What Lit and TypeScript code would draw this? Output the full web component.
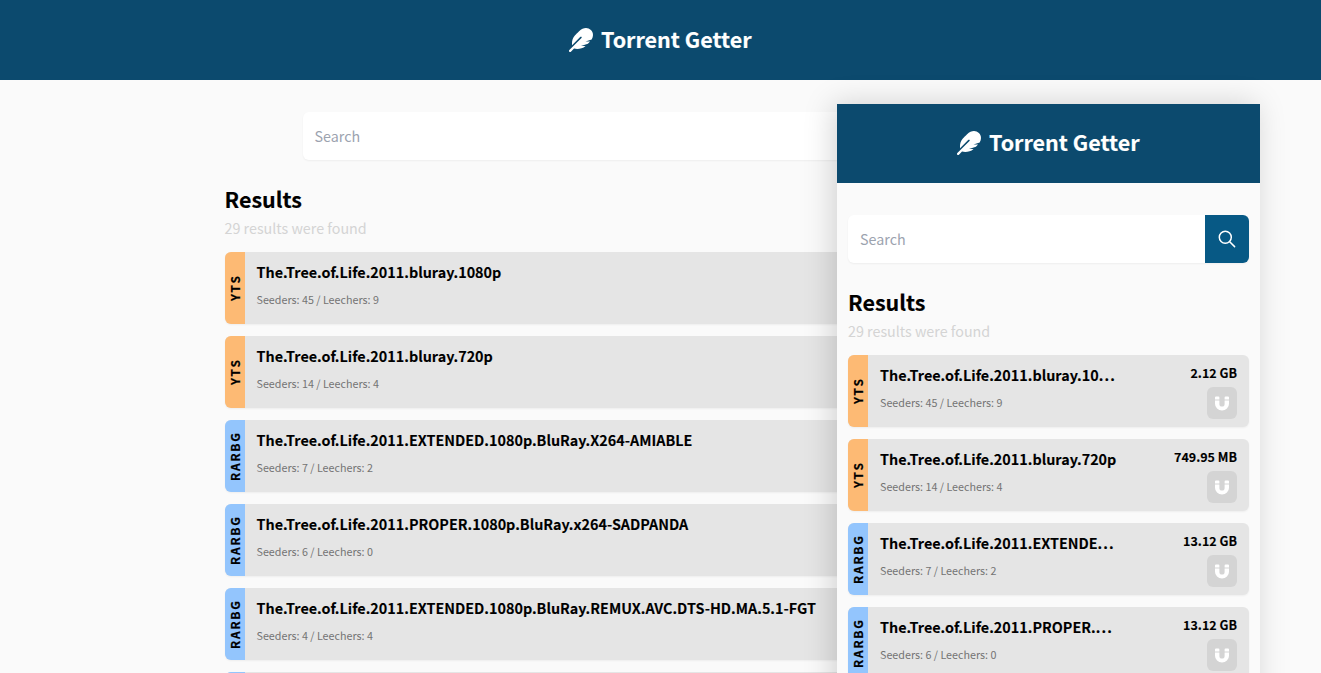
import { LitElement, html, css, nothing } from "lit";
import { customElement, property } from "lit/decorators.js";
import { classMap } from "lit/directives/class-map.js";

interface Torrent {
  provider: "YTS" | "RARBG";
  name: string;
  seeders: number;
  leechers: number;
  size: string;
}

const torrents: Torrent[] = [
  { provider: "YTS", name: "The.Tree.of.Life.2011.bluray.1080p", seeders: 45, leechers: 9, size: "2.12 GB" },
  { provider: "YTS", name: "The.Tree.of.Life.2011.bluray.720p", seeders: 14, leechers: 4, size: "749.95 MB" },
  { provider: "RARBG", name: "The.Tree.of.Life.2011.EXTENDED.1080p.BluRay.X264-AMIABLE", seeders: 7, leechers: 2, size: "13.12 GB" },
  { provider: "RARBG", name: "The.Tree.of.Life.2011.PROPER.1080p.BluRay.x264-SADPANDA", seeders: 6, leechers: 0, size: "13.12 GB" },
  { provider: "RARBG", name: "The.Tree.of.Life.2011.EXTENDED.1080p.BluRay.REMUX.AVC.DTS-HD.MA.5.1-FGT", seeders: 4, leechers: 4, size: "" },
  { provider: "RARBG", name: "", seeders: 0, leechers: 0, size: "" },
];

// Number of characters of each name that fit beside the size on a narrow card.
const narrowLengths = [31, 33, 29, 29];
const narrowTorrents = torrents.slice(0, 4).map((t, i) => ({
  ...t,
  name: t.name.slice(0, narrowLengths[i]),
  cut: t.name.length > narrowLengths[i],
}));

const base = css`
  * {
    box-sizing: border-box;
    margin: 0;
  }
`;

@customElement("app-banner")
export class AppBanner extends LitElement {
  static styles = [
    base,
    css`
      :host {
        display: flex;
        align-items: center;
        justify-content: center;
        height: 80px;
        background: #0c4a6e;
        color: #fff;
      }
      .logo {
        width: 24px;
        height: 24px;
        margin-right: 7.5px;
        fill: currentColor;
      }
      .title {
        padding-bottom: 2px;
        font-size: 21.5px;
        line-height: 32px;
        font-weight: 700;
        -webkit-text-stroke: 0.15px;
      }
    `,
  ];
  render() {
    return html`
      <svg class="logo" viewBox="0 0 512 512">
        <path d="M467.14 44.84c-62.55-62.48-161.67-64.78-252.28 25.73-78.61 78.52-60.98 60.92-85.75 85.66-60.46 60.39-70.39 150.83-63.79 211.17l178.44-178.25c6.26-6.25 16.4-6.25 22.65 0s6.25 16.38 0 22.63L7.04 471.03c-9.38 9.37-9.38 24.57 0 33.94 9.38 9.37 24.6 9.37 33.98 0l66.1-66.03C159.42 454.65 279 457.11 353.95 384h-98.19l147.57-49.14c49.99-49.93 36.38-36.18 46.31-46.86h-97.78l131.54-43.8c45.44-74.46 34.31-148.84-16.26-199.36z"/>
      </svg>
      <h1 class="title">Torrent Getter</h1>
    `;
  }
}

@customElement("search-bar")
export class SearchBar extends LitElement {
  static styles = [
    base,
    css`
      :host {
        display: flex;
        height: 48px;
        border-radius: 6px;
        background: #fff;
        box-shadow: 0 1px 2px rgba(0, 0, 0, 0.05);
        overflow: hidden;
      }
      .field {
        flex: 1;
        min-width: 0;
        padding: 0 12px;
        line-height: 48px;
        font-size: 14.3px;
        color: #9ca3af;
      }
      .button {
        display: flex;
        align-items: center;
        justify-content: center;
        width: 44px;
        background: #075985;
      }
      .icon {
        width: 20px;
        height: 20px;
        fill: none;
        stroke: #fff;
        stroke-width: 1.5;
        stroke-linecap: round;
      }
    `,
  ];
  render() {
    return html`
      <div class="field">Search</div>
      <div class="button">
        <svg class="icon" viewBox="0 0 20 20">
          <circle cx="8.3" cy="8.3" r="6" />
          <path d="M12.7 12.7L17.6 17.6" />
        </svg>
      </div>
    `;
  }
}

@customElement("torrent-card")
export class TorrentCard extends LitElement {
  @property({ attribute: false }) torrent!: Torrent & { cut?: boolean };

  static styles = [
    base,
    css`
      :host {
        display: flex;
        height: 72px;
        border-radius: 6px;
        background: #e5e5e5;
        box-shadow: 0 1px 2px rgba(0, 0, 0, 0.05);
        overflow: hidden;
      }
      .provider {
        display: flex;
        flex: none;
        align-items: center;
        justify-content: center;
        width: 20px;
        writing-mode: vertical-rl;
        transform: rotate(180deg);
        font-size: 12px;
        line-height: 20px;
        font-weight: 700;
        letter-spacing: 1.8px;
        -webkit-text-stroke: 0.2px;
      }
      .yts {
        background: #fdba74;
      }
      .rarbg {
        background: #93c5fd;
      }
      .info {
        flex: 1;
        min-width: 0;
        padding: 8px 12px;
      }
      .name {
        font-size: 14.37px;
        line-height: 24px;
        font-weight: 700;
        white-space: nowrap;
        -webkit-text-stroke: 0.1px;
      }
      .dots {
        letter-spacing: 1.1px;
      }
      .peers {
        margin-top: 6px;
        font-size: 10.74px;
        line-height: 20px;
        color: #737373;
      }
      .side {
        display: flex;
        flex: none;
        flex-direction: column;
        align-items: flex-end;
        width: 117px;
        padding: 8px 12px 0 0;
      }
      .size {
        font-size: 12.5px;
        line-height: 20px;
        font-weight: 700;
        -webkit-text-stroke: 0.1px;
      }
      .magnet {
        display: flex;
        align-items: center;
        justify-content: center;
        width: 30px;
        height: 32px;
        margin-top: 4px;
        border-radius: 6px;
        background: #d4d4d4;
      }
      .icon {
        width: 14px;
        height: 15px;
        fill: #fff;
      }
    `,
  ];
  render() {
    const t = this.torrent;
    return html`
      <div class=${classMap({ provider: true, yts: t.provider === "YTS", rarbg: t.provider === "RARBG" })}>${t.provider}</div>
      <div class="info">
        <div class="name">${t.name}${t.cut ? html`<span class="dots">...</span>` : nothing}</div>
        <div class="peers">Seeders: ${t.seeders} / Leechers: ${t.leechers}</div>
      </div>
      <div class="side">
        <div class="size">${t.size}</div>
        <div class="magnet">
          <svg class="icon" viewBox="0 0 14 15">
            <path d="M1 .5h2.400a1 1 0 0 1 1 1V3.600H0V1.500a1 1 0 0 1 1-1zM10.600 .5H13a1 1 0 0 1 1 1V3.600H9.600V1.500a1 1 0 0 1 1-1zM0 4.600h4.400v3.400a2.600 2.600 0 0 0 5.200 0V4.600H14v3.200a7 6.800 0 0 1-14 0z"/>
          </svg>
        </div>
      </div>
    `;
  }
}

@customElement("result-page")
export class ResultPage extends LitElement {
  @property({ attribute: false }) items: Torrent[] = [];

  static styles = [
    base,
    css`
      :host {
        display: block;
      }
      .content {
        width: 100%;
        max-width: 896px;
        margin: 0 auto;
        padding: 32px var(--gutter, 12px) 0;
      }
      .search {
        max-width: 716px;
        margin: 0 auto;
      }
      .heading {
        margin-top: 23px;
        font-size: 21.5px;
        line-height: 32px;
        font-weight: 700;
        -webkit-text-stroke: 0.15px;
      }
      .count {
        margin-top: 1px;
        font-size: 14.3px;
        line-height: 24px;
        color: #d4d4d4;
      }
      .list {
        display: grid;
        grid-template-columns: minmax(0, 1fr);
        gap: 12px;
        margin-top: 12px;
      }
    `,
  ];
  render() {
    return html`
      <app-banner></app-banner>
      <div class="content">
        <search-bar class="search"></search-bar>
        <h2 class="heading">Results</h2>
        <p class="count">29 results were found</p>
        <div class="list">
          ${this.items.map((t) => html`<torrent-card .torrent=${t}></torrent-card>`)}
        </div>
      </div>
    `;
  }
}

@customElement("app-root")
export class AppRoot extends LitElement {
  static styles = [
    base,
    css`
      :host {
        display: block;
        position: relative;
        height: 673px;
        overflow: hidden;
        background: #fafafa;
        color: #000;
        font-family: "Noto Sans CJK SC", "Noto Sans", sans-serif;
      }
      .phone {
        position: absolute;
        top: 104px;
        left: 837px;
        width: 423px;
        height: 640px;
        overflow: hidden;
        background: #fafafa;
        box-shadow: -4px 0 28px rgba(0, 0, 0, 0.17);
        --gutter: 11px;
      }
      .small {
        margin-top: -1px;
      }
    `,
  ];
  render() {
    return html`
      <result-page .items=${torrents}></result-page>
      <div class="phone">
        <result-page class="small" .items=${narrowTorrents}></result-page>
      </div>
    `;
  }
}
